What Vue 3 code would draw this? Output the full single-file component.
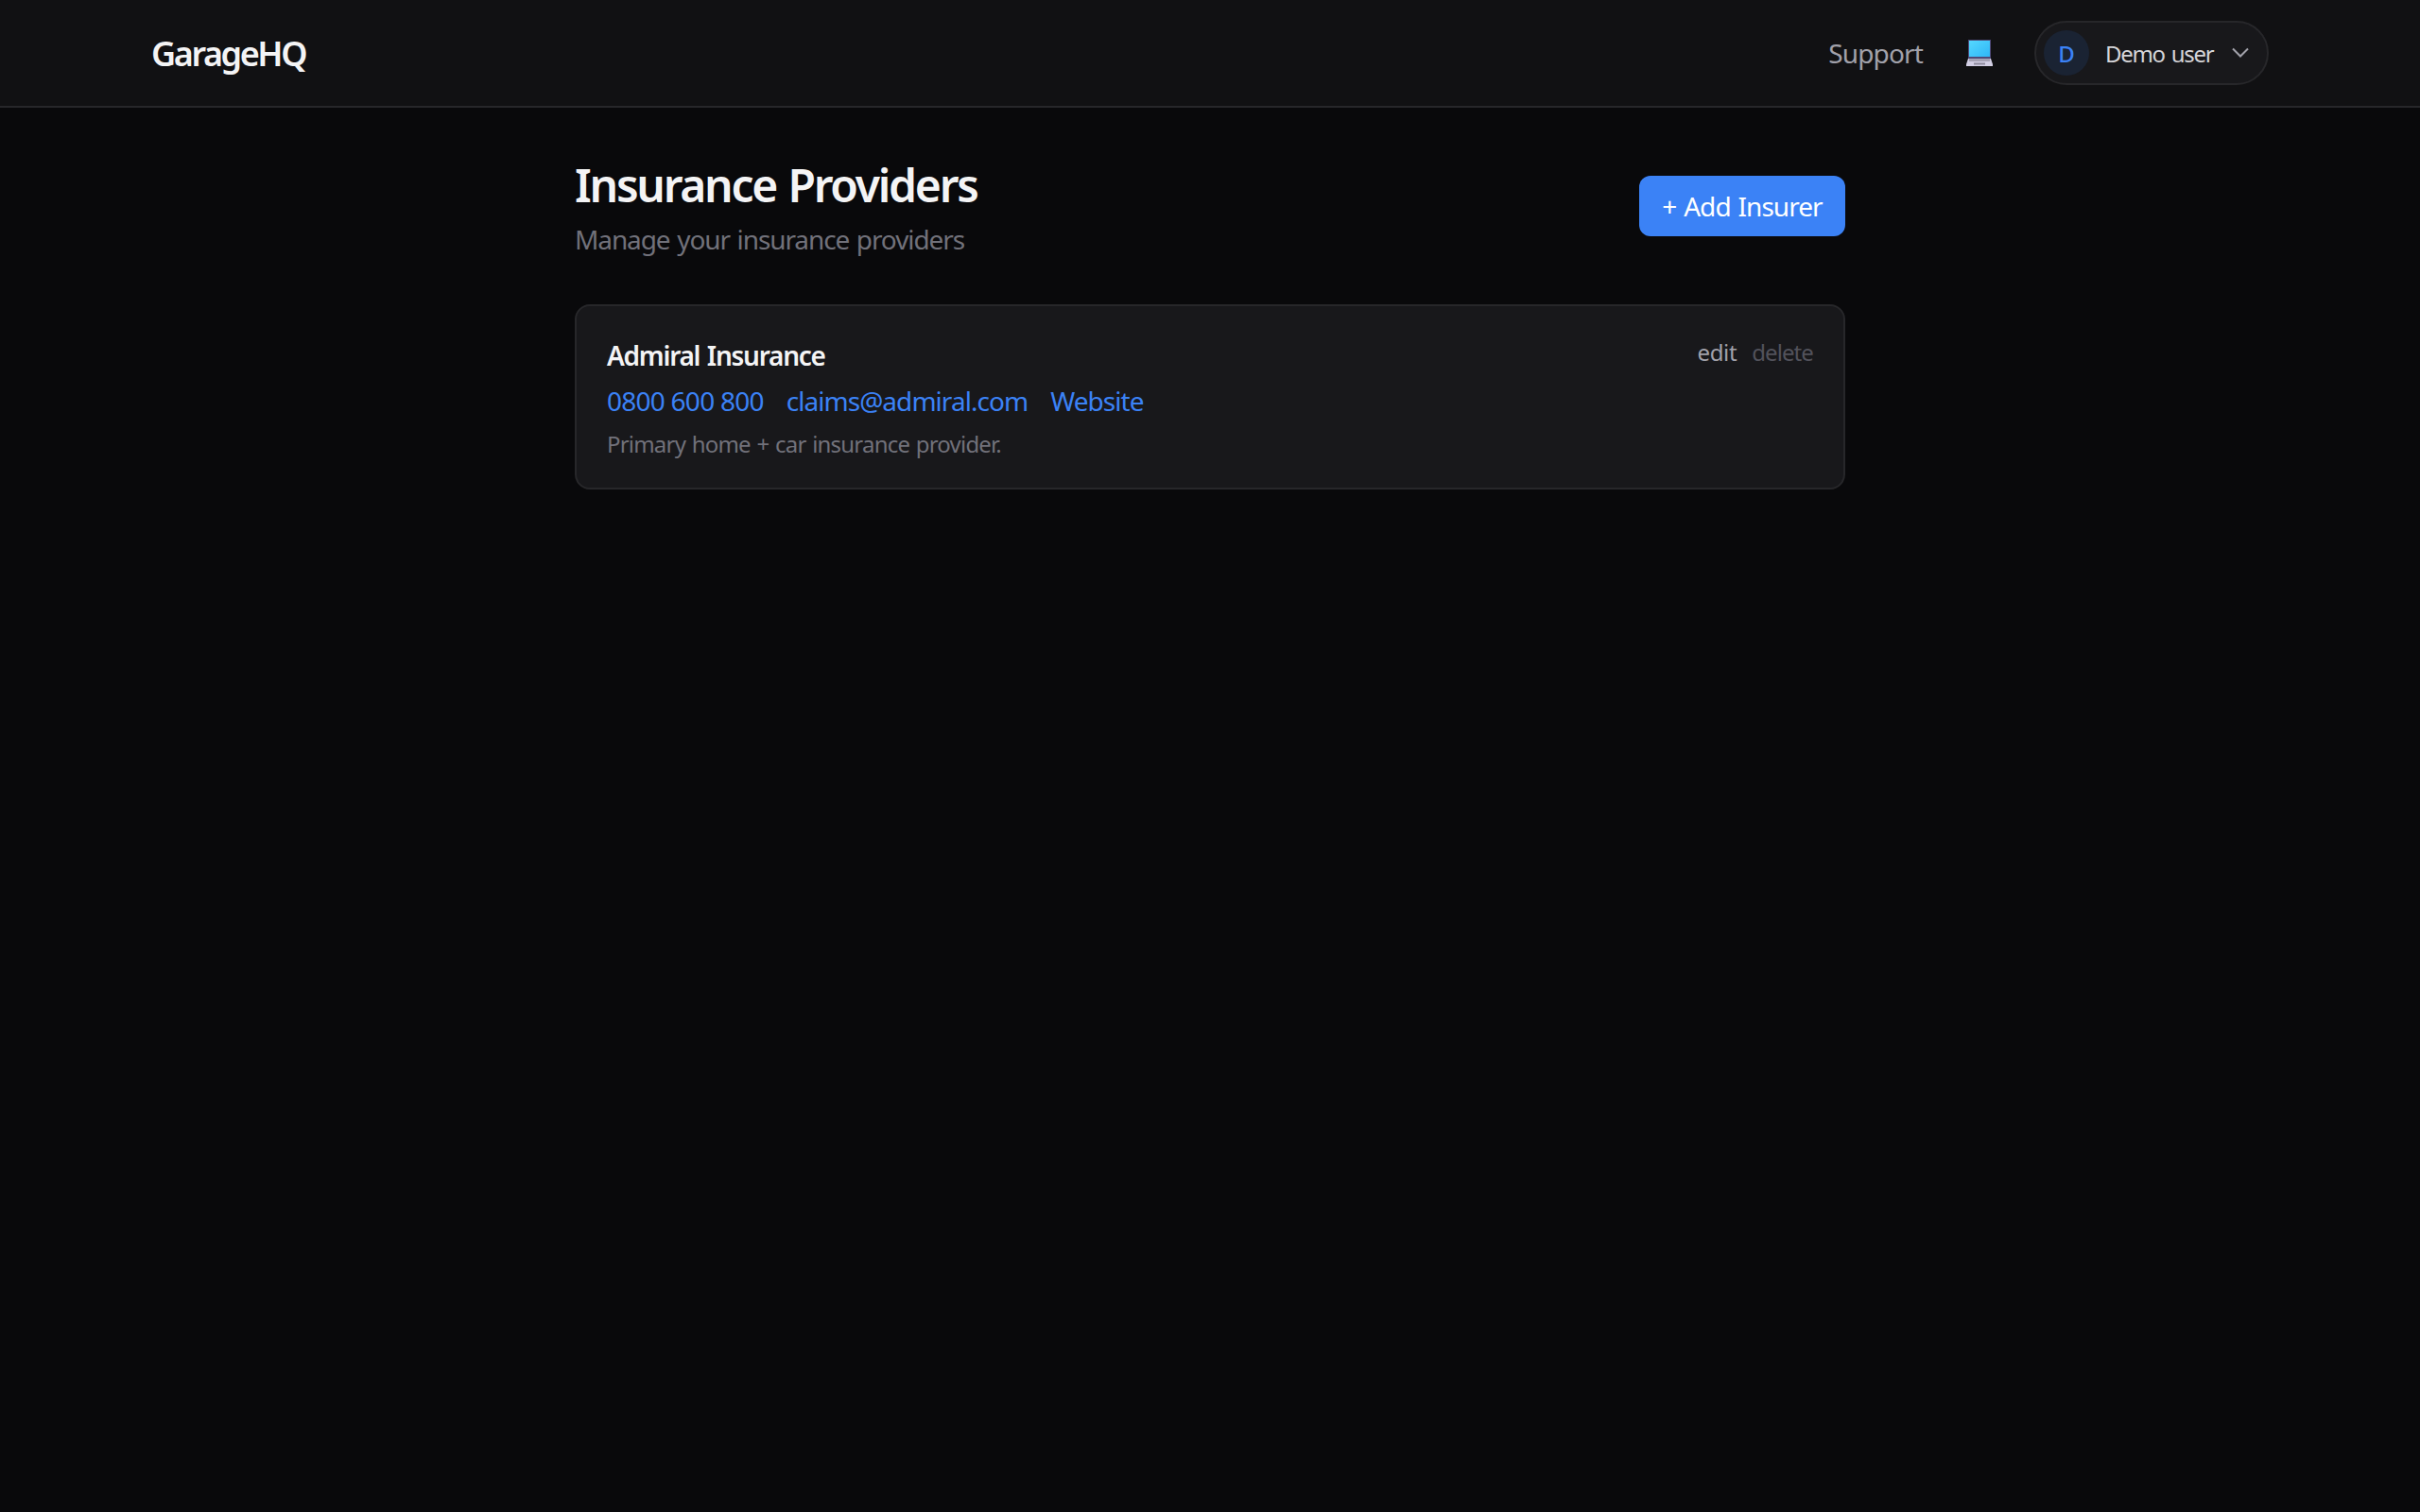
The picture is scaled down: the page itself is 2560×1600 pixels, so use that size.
<template>
  <div class="page">
    <header class="topbar">
      <div class="brand">GarageHQ</div>
      <nav class="nav">
        <a class="support">Support</a>
        <svg class="laptop" width="28" height="28" viewBox="0 0 28 28" aria-hidden="true">
          <defs>
            <linearGradient id="scr" x1="0" y1="0" x2="1" y2="1">
              <stop offset="0" stop-color="#55d8ff" />
              <stop offset="1" stop-color="#2fb6f6" />
            </linearGradient>
          </defs>
          <rect x="2" y="0" width="24" height="20" fill="#4f4a78" />
          <rect x="3" y="1" width="22" height="17" fill="url(#scr)" />
          <path d="M2 20h24l2 6v2H0v-2z" fill="#d3cfe4" />
          <rect x="3" y="20" width="22" height="3" fill="#a5a2b4" />
          <rect x="8" y="24.5" width="12" height="2" fill="#8d8a9c" />
        </svg>
        <button class="user">
          <span class="avatar">D</span>
          <span class="uname">Demo user</span>
          <svg class="chev" width="18" height="12" viewBox="0 0 18 12" aria-hidden="true">
            <path d="M1 1.5l8 8 8-8" fill="none" stroke="#a1a1aa" stroke-width="2" />
          </svg>
        </button>
      </nav>
    </header>
    <main class="main">
      <div class="head">
        <div>
          <h1>Insurance Providers</h1>
          <p class="sub">Manage your insurance providers</p>
        </div>
        <button class="add">+ Add Insurer</button>
      </div>
      <section class="card">
        <div class="info">
          <div class="name">Admiral Insurance</div>
          <div class="links">
            <a class="phone">0800 600 800</a>
            <a>claims@admiral.com</a>
            <a>Website</a>
          </div>
          <div class="note">Primary home + car insurance provider.</div>
        </div>
        <div class="actions">
          <a class="edit">edit</a>
          <a class="del">delete</a>
        </div>
      </section>
    </main>
  </div>
</template>

<script setup>
</script>

<style>
html, body { margin: 0; background: #09090b; }
</style>

<style scoped>
.page {
  min-height: 1600px;
  background: #09090b;
  font-family: "Noto Sans", "Open Sans", sans-serif;
  color: #f4f4f5;
}
.topbar {
  box-sizing: border-box;
  height: 114px;
  padding: 0 160px;
  display: flex;
  align-items: center;
  justify-content: space-between;
  background: #111113;
  border-bottom: 2px solid #27272a;
}
.brand { font-size: 36px; font-weight: 600; letter-spacing: -2.4px; color: #f4f4f5; }
.nav { display: flex; align-items: center; }
.support { font-size: 28px; color: #a1a1aa; letter-spacing: -0.85px; }
.laptop { margin-left: 46px; margin-right: 44px; }
.user {
  box-sizing: border-box;
  width: 248px;
  height: 68px;
  padding: 0 19px 0 8px;
  display: flex;
  align-items: center;
  background: #18181b;
  border: 2px solid #27272a;
  border-radius: 34px;
  font-family: inherit;
}
.avatar {
  width: 48px;
  height: 48px;
  border-radius: 50%;
  background: #1a2333;
  color: #3b82f6;
  font-size: 24px;
  font-weight: 500;
  display: flex;
  align-items: center;
  justify-content: center;
}
.uname { margin-left: 17px; font-size: 24px; color: #d4d4d8; letter-spacing: -1.3px; word-spacing: 2px; }
.chev { margin-left: auto; }
.main { width: 1344px; margin: 0 auto; padding-top: 50px; }
.head { display: flex; justify-content: space-between; align-items: center; margin-bottom: 50px; }
h1 { margin: 0; font-size: 48px; line-height: 64px; font-weight: 600; letter-spacing: -2.25px; word-spacing: 2px; color: #f4f4f5; }
.sub { margin: 6px 0 0; font-size: 28px; line-height: 38px; color: #71717a; letter-spacing: -1.1px; word-spacing: 1.5px; }
.add {
  height: 64px;
  width: 218px;
  border: 0;
  border-radius: 12px;
  background: #3b82f6;
  color: #fff;
  font-family: inherit;
  font-size: 28px;
  letter-spacing: -0.95px;
  word-spacing: 1.5px;
}
.card {
  box-sizing: border-box;
  height: 196px;
  padding: 32px;
  display: flex;
  justify-content: space-between;
  background: #18181b;
  border: 2px solid #27272a;
  border-radius: 16px;
}
.name { font-size: 28px; line-height: 40px; font-weight: 600; letter-spacing: -1.25px; word-spacing: 1.5px; color: #f4f4f5; }
.links { display: flex; gap: 24px; margin-top: 8px; font-size: 28px; line-height: 40px; color: #3b82f6; letter-spacing: -0.96px; }
.phone { letter-spacing: -0.75px; }
.note { margin-top: 10px; font-size: 24px; line-height: 32px; color: #71717a; letter-spacing: -0.8px; word-spacing: 1.2px; }
.actions { display: flex; gap: 16px; margin-top: 1px; font-size: 24px; line-height: 32px; }
.edit { color: #a1a1aa; letter-spacing: -0.4px; }
.del { color: #52525b; letter-spacing: -0.9px; }
</style>
